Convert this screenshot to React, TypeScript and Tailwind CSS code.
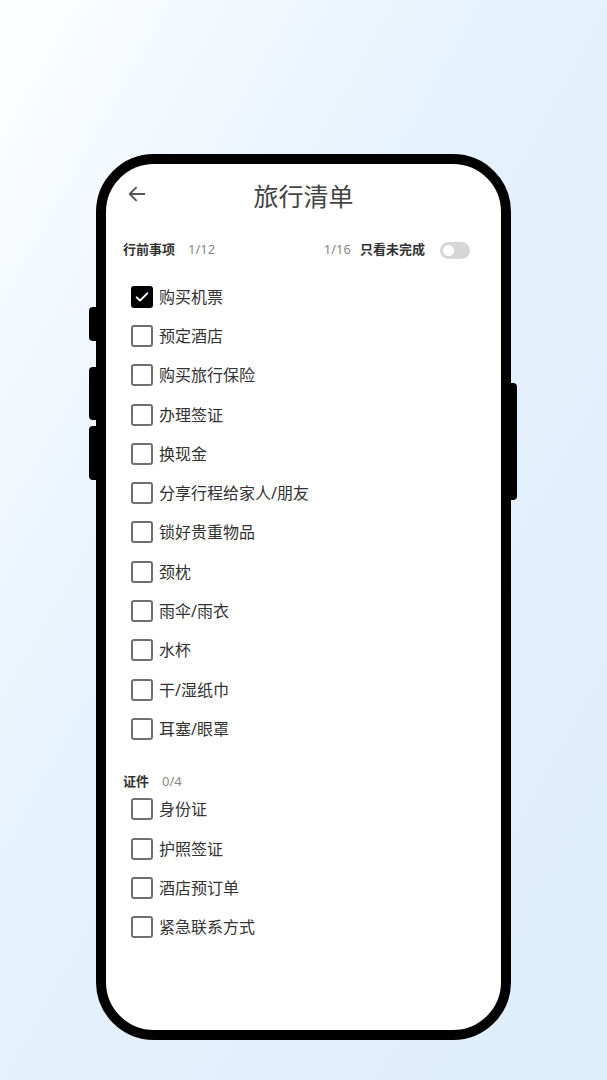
import { useState } from "react";

const preTrip = [
  "购买机票",
  "预定酒店",
  "购买旅行保险",
  "办理签证",
  "换现金",
  "分享行程给家人/朋友",
  "锁好贵重物品",
  "颈枕",
  "雨伞/雨衣",
  "水杯",
  "干/湿纸巾",
  "耳塞/眼罩",
];

const docs = ["身份证", "护照签证", "酒店预订单", "紧急联系方式"];

function CheckRow({ label, checked, onToggle }: { label: string; checked: boolean; onToggle: () => void }) {
  return (
    <div className="flex h-[39.3px] items-center pl-[8px]" onClick={onToggle}>
      {checked ? (
        <div className="flex h-[22px] w-[22px] items-center justify-center rounded-[3px] bg-black">
          <svg width="16" height="16" viewBox="0 0 24 24" fill="none" stroke="white" strokeWidth="3" strokeLinecap="round" strokeLinejoin="round">
            <path d="M4 12.5l5 5L20 6.5" />
          </svg>
        </div>
      ) : (
        <div className="h-[22px] w-[22px] rounded-[3px] border-2 border-[#707070]"></div>
      )}
      <span className="ml-[6px] text-[16px] leading-none text-[#333]">{label}</span>
    </div>
  );
}

export default function App() {
  const [done, setDone] = useState<Record<string, boolean>>({ 购买机票: true });
  const [onlyTodo, setOnlyTodo] = useState<boolean>(false);

  const toggle = (k: string): void => setDone((d) => ({ ...d, [k]: !d[k] }));

  return (
    <div
      className="h-[1080px] w-full bg-gradient-to-br from-[#fbfdff] from-[5%] via-[#e6f2fd] via-[40%] to-[#deedfb] pt-[154px]"
      style={{ fontFamily: '"Noto Sans", "Noto Sans CJK SC", sans-serif' }}
    >
      <div className="relative mx-auto h-[886px] w-[415px]">
        {/* side buttons */}
        <div className="absolute left-[-7px] top-[153px] h-[34px] w-[8px] rounded-l-[4px] bg-black"></div>
        <div className="absolute left-[-7px] top-[213px] h-[53px] w-[8px] rounded-l-[4px] bg-black"></div>
        <div className="absolute left-[-7px] top-[272px] h-[54px] w-[8px] rounded-l-[4px] bg-black"></div>
        <div className="absolute right-[-6px] top-[229px] h-[117px] w-[8px] rounded-r-[4px] bg-black"></div>

        <div className="relative h-full w-full overflow-hidden rounded-[58px] border-[10px] border-black bg-white">
          <div className="px-[17px]">
            <div className="grid h-[60px] grid-cols-[1fr_auto_1fr] items-center">
              <svg className="ml-[3px]" width="22" height="22" viewBox="0 0 24 24" fill="none" stroke="#555" strokeWidth="2" strokeLinecap="round" strokeLinejoin="round">
                <path d="M20 12H4M11 5l-7 7 7 7" />
              </svg>
              <div className="pt-[4px] text-[25px] leading-none text-[#444]">旅行清单</div>
              <div></div>
            </div>

            <div className="mt-[16px] flex h-[20px] items-center">
              <span className="text-[13px] font-bold text-[#333]">行前事项</span>
              <span className="ml-[13px] text-[13px] text-[#888]">1/12</span>
              <span className="ml-auto text-[13px] text-[#888]">1/16</span>
              <span className="ml-[9px] text-[13px] font-bold text-[#333]">只看未完成</span>
              <button
                className={`ml-[15px] mr-[14px] flex h-[17px] w-[30px] items-center rounded-full px-[3px] ${onlyTodo ? "justify-end bg-black" : "bg-[#d6d6d6]"}`}
                onClick={() => setOnlyTodo(!onlyTodo)}
              >
                <span className="h-[11px] w-[11px] rounded-full bg-white"></span>
              </button>
            </div>

            <div className="mt-[17px]">
              {preTrip
                .filter((t) => !onlyTodo || !done[t])
                .map((t) => (
                  <CheckRow key={t} label={t} checked={!!done[t]} onToggle={() => toggle(t)} />
                ))}
            </div>

            <div className="mt-[23px] flex h-[20px] items-center">
              <span className="text-[13px] font-bold text-[#333]">证件</span>
              <span className="ml-[13px] text-[13px] text-[#888]">0/4</span>
            </div>

            <div className="mt-[-2px]">
              {docs
                .filter((t) => !onlyTodo || !done[t])
                .map((t) => (
                  <CheckRow key={t} label={t} checked={!!done[t]} onToggle={() => toggle(t)} />
                ))}
            </div>
          </div>
        </div>
      </div>
    </div>
  );
}
